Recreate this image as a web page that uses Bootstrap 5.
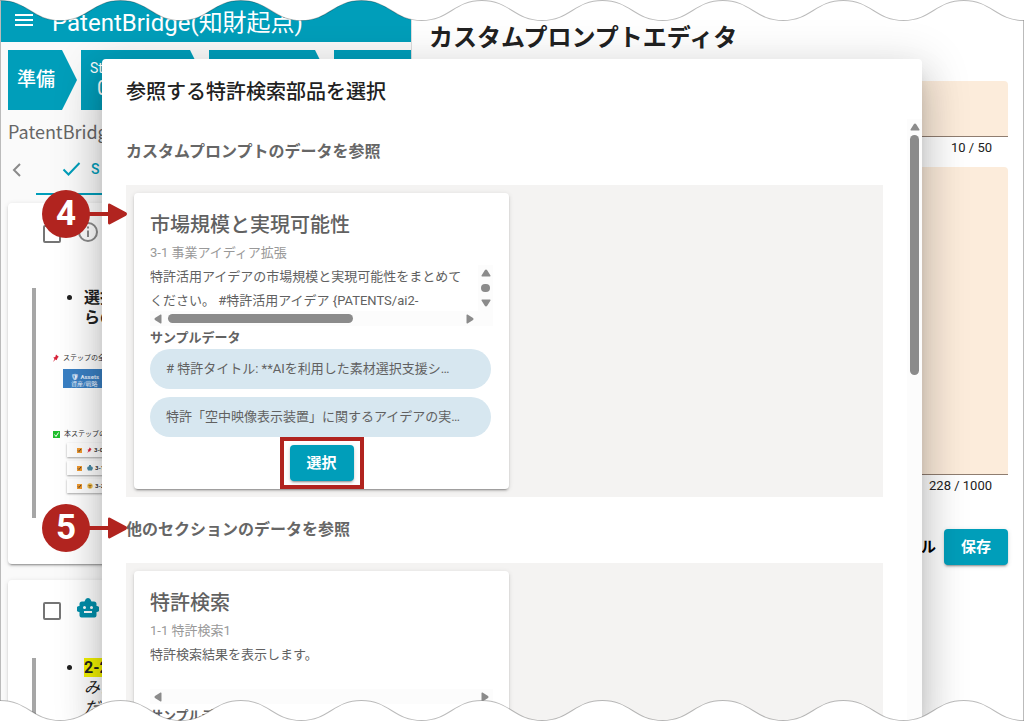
<!DOCTYPE html>
<html lang="ja">
<head>
<meta charset="utf-8">
<meta name="viewport" content="width=device-width, initial-scale=1">
<title>PatentBridge</title>
<link href="https://cdn.jsdelivr.net/npm/bootstrap@5.3.0/dist/css/bootstrap.min.css" rel="stylesheet">
<style>
:root{--teal:#009eba;--alert:#b1241f;--thumb:#8b8b8b}
body{font-family:Roboto,"Noto Sans CJK JP",sans-serif;font-size:13px;line-height:24px;color:#212121;background:#fff}
h1,h2,h3,h4,p,ul{margin:0}
.screen{height:100vh;min-height:600px}
.side{width:411px;background:#fafafa;border-left:1px solid #bbb}
.bar{height:42px;background:var(--teal);padding-left:13px;gap:18px}
.bar h1{font-size:24px;line-height:30px;padding-top:4px;font-weight:400}
.steps{padding:8px 0 0 7px;gap:4px}
.step{height:60px;background:var(--teal);color:#fff;width:124px;padding:10px 9px 0;font-size:14px;clip-path:polygon(0 0,calc(100% - 15px) 0,100% 50%,calc(100% - 15px) 100%,0 100%)}
.step-ready{width:69px;font-size:19px;line-height:40px;font-weight:500}
.step-third{width:121px}
.step-no{font-size:20px;line-height:20px;padding-left:7px}
.crumb{font:18px/26px "Noto Sans CJK JP",sans-serif;color:#666;padding:8px 0 0 7px}
.tabs{height:51px;padding-left:9px}
.tab-on{height:51px;margin-left:12px;padding:0 26px;gap:10px;border:0;border-bottom:2px solid var(--teal);background:none;color:var(--teal);font-size:14px;font-weight:500;width:300px}
.panel{background:#fff;border-radius:4px;box-shadow:0 3px 1px -2px rgba(0,0,0,.2),0 2px 2px rgba(0,0,0,.14),0 1px 5px rgba(0,0,0,.12)}
.side .panel{margin:8px 8px 0 7px;height:361px}
.side .panel + .panel{margin-top:16px}
.panel-head{height:58px;padding:0 0 0 35px;gap:16px}
.tick{appearance:none;width:18px;height:18px;border:2px solid #757575;border-radius:2px;margin:0}
.quote{margin:27px 16px 0 24px;border-left:4px solid #a6a6a6;height:230px;padding-left:17px}
.quote-near{margin-top:20px}
.quote ul{padding-left:31px;font-size:16px;line-height:20px}
.pic{font-size:7px;line-height:10px;color:#333;padding-top:25px}
.pic-line{margin-bottom:6px}
.asset{margin:0 0 41px 10px;background:#3a80c4;color:#e8f2ff;height:19px;width:120px;padding-left:8px;font-size:6px;line-height:7px}
.row-item{margin:0 0 4px 14px;height:14px;padding-left:10px;gap:2px;box-shadow:0 1px 2px rgba(0,0,0,.35);font-size:6px;font-weight:700;width:140px}
.row-item svg + svg{margin-left:3px}
.hl{background:#f3f300;font-weight:700}
.editor{background:#fff;border-left:1px solid #ddd;border-right:1px solid #bbb;padding:22px 15px 0 17px}
.editor h2{font-size:24px;line-height:32px;font-weight:700;margin-bottom:27px}
.fill{background:#fcecdb;border:0;border-bottom:1px solid #8f7d70;border-radius:4px 4px 0 0;resize:none;display:block;width:100%;height:56px}
.fill-tall{height:308px}
.count{line-height:22px;padding-right:16px}
.act{height:36px;font-size:15px;line-height:20px;font-weight:700;border:0;border-radius:4px}
.act-main{width:64px;background:var(--teal);color:#fff;box-shadow:0 3px 1px -2px rgba(0,0,0,.2),0 2px 2px rgba(0,0,0,.14),0 1px 5px rgba(0,0,0,.12)}
.dialog{top:59px;bottom:0;left:102px;right:102px;background:#fff;border-radius:4px 4px 0 0;box-shadow:0 11px 15px -7px rgba(0,0,0,.2),0 24px 38px 3px rgba(0,0,0,.14),0 9px 46px 8px rgba(0,0,0,.12)}
.dialog > h2{font-size:20px;line-height:32px;font-weight:500;padding:17px 24px 11px}
.dialog-body,.sections{min-height:0}
.sections{padding:0 24px}
.sections h3{font-size:16px;line-height:66px;font-weight:700;color:#666}
.tray{background:#f4f3f2;padding:8px;height:312px}
.pick{width:375px;height:296px;padding:17px 16px 8px;color:#616161}
.pick h4{font-size:20px;line-height:31px;font-weight:500}
.sub-line{color:#999}
.scroller{display:grid;grid-template-columns:1fr 15px;grid-template-rows:46px 15px;line-height:24px}
.sample{line-height:23px}
.track{background:#fcfcfc;padding:4px}
.track-wide{grid-column:1/3}
.track-main{width:15px;padding:4px 0}
.thumb{background:var(--thumb);border-radius:5px;width:9px}
.thumb-h{width:185px;height:9px;margin-left:6px}
.thumb-main{height:240px}
.chip{height:40px;border-radius:20px;background:#d7e7f0;padding:0 16px;line-height:39px;margin:0 2px 8px 0}
.frame{width:84px;height:52px;left:50%;top:50%;transform:translate(-50%,-50%);border:4px solid var(--alert)}
.callout{left:-84px;width:86px;height:48px}
.callout b{width:48px;font-size:35px;line-height:48px}
.call-a{top:71px}
.call-b{top:7px}
.wave{height:21px;left:0;z-index:5}
</style>
</head>
<body>
<svg width="0" height="0" class="position-absolute" aria-hidden="true">
<symbol id="tri" viewBox="0 0 10 8"><path d="M5 .5Q5.700 .5 6.200 1.300L9.500 6.500Q9.800 7.500 8.800 7.500H1.200Q.2 7.500 .5 6.500L3.800 1.300Q4.300 .5 5 .5Z" fill="#8b8b8b"/></symbol>
<symbol id="triL" viewBox="0 0 8 10"><path d="M.5 5Q.5 4.300 1.300 3.800L6.500 .5Q7.500 .2 7.500 1.200V8.800Q7.500 9.800 6.500 9.500L1.300 6.200Q.5 5.700 .5 5Z" fill="#8b8b8b"/></symbol>
</svg>
<div class="screen position-relative overflow-hidden d-flex">
  <aside class="side flex-shrink-0">
    <header class="bar d-flex align-items-center text-white">
      <svg width="20" height="14" viewBox="0 0 20 14" stroke="#fff" stroke-width="2"><path d="M1 1h18M1 6h18M1 11h18"/></svg>
      <h1>PatentBridge(知財起点)</h1>
    </header>
    <div class="steps d-flex overflow-hidden">
      <div class="step step-ready flex-shrink-0">準備</div>
      <div class="step flex-shrink-0"><div class="lh-sm">Step</div><div class="step-no">0</div></div>
      <div class="step step-third flex-shrink-0"></div>
      <div class="step flex-shrink-0"></div>
    </div>
    <div class="crumb">PatentBridge</div>
    <div class="tabs d-flex align-items-center">
      <svg width="14" height="16" viewBox="0 0 14 16" fill="none" stroke="#8a8a8a" stroke-width="2"><path d="M10 2 4 8l6 6"/></svg>
      <button class="tab-on d-flex align-items-center" type="button"><svg width="19" height="14" viewBox="0 0 19 14" fill="none" stroke="#009eba" stroke-width="2"><path d="m1.500 7.500 5 5L17.500 1"/></svg>S</button>
    </div>
    <section class="panel overflow-hidden">
      <div class="panel-head d-flex align-items-center">
        <input class="tick mt-1" type="checkbox" aria-label="選択">
        <svg width="22" height="22" viewBox="0 0 22 22" fill="none" stroke="#8c8c8c" stroke-width="2"><circle cx="11" cy="11" r="9"/><path d="M11 9.500v6.500M11 5.500v2"/></svg>
      </div>
      <div class="quote">
        <ul><li class="fw-bold">選択<br>らの</li></ul>
        <div class="pic">
          <div class="pic-line d-flex align-items-center gap-1"><svg width="6" height="8" viewBox="0 0 6 8"><path d="m3 .5 3 2.500-1 .3-1 2-.2 1L2.500 5.500 0 8l1.500-3L.3 3.500l2-.5Z" fill="#d8233a"/></svg>ステップの全体</div>
          <div class="asset pt-1"><b>🛡 Assets</b><br>資産/戦略</div>
          <div class="d-flex align-items-center gap-1 mb-1"><svg width="7" height="7" viewBox="0 0 7 7"><path d="M0 0h7v7H0Z" fill="#1fbe2c"/><path d="m1.500 3.500 1.500 2 2.500-4" fill="none" stroke="#fff"/></svg>本ステップの</div>
          <div class="row-item d-flex align-items-center"><svg width="5" height="5" viewBox="0 0 5 5"><path d="M0 0h5v5H0Z" fill="#f29a2e"/><path d="m1 2.500 1 1L4 1" fill="none" stroke="#543"/></svg><svg width="5" height="6" viewBox="0 0 6 8"><path d="m3 .5 3 2.500-1 .3-1 2-.2 1L2.500 5.500 0 8l1.500-3L.3 3.500l2-.5Z" fill="#d8233a"/></svg>3-0</div>
          <div class="row-item d-flex align-items-center"><svg width="5" height="5" viewBox="0 0 5 5"><path d="M0 0h5v5H0Z" fill="#f29a2e"/><path d="m1 2.500 1 1L4 1" fill="none" stroke="#543"/></svg><svg width="6" height="6" viewBox="0 0 6 6"><path d="M2 0h2v1.500h1L6 3 5 5.500H1L0 3l1-1.500h1Z" fill="#4b8ba5"/></svg>3-1</div>
          <div class="row-item d-flex align-items-center"><svg width="5" height="5" viewBox="0 0 5 5"><path d="M0 0h5v5H0Z" fill="#f29a2e"/><path d="m1 2.500 1 1L4 1" fill="none" stroke="#543"/></svg><svg width="6" height="6" viewBox="0 0 6 6"><circle cx="3" cy="3" r="2.700" fill="#f0c04e"/><path d="M1.500 2.500h3M2 4h2" stroke="#a66e25"/></svg>3-2</div>
        </div>
      </div>
    </section>
    <section class="panel overflow-hidden">
      <div class="panel-head d-flex align-items-center">
        <input class="tick mt-1" type="checkbox" aria-label="選択">
        <svg width="22" height="22" viewBox="0 0 22 22"><path fill="#008fab" fill-rule="evenodd" d="M11 0a3 3 0 0 1 3 2.500L14.500 3.500H17A2.500 2.500 0 0 1 19.500 6v2A3 3 0 0 1 19.500 14v3.500A2 2 0 0 1 17.500 19.500h-13A2 2 0 0 1 2.500 17.500V14A3 3 0 0 1 2.500 8V6A2.500 2.500 0 0 1 5 3.500h2.500L8 2.500A3 3 0 0 1 11 0ZM7.500 8a1.500 1.500 0 1 0 0 3 1.500 1.500 0 0 0 0-3Zm7 0a1.500 1.500 0 1 0 0 3 1.500 1.500 0 0 0 0-3ZM7 13V15h8v-2Z"/></svg>
      </div>
      <div class="quote quote-near">
        <ul><li><span class="hl">2-2</span><br><i>みた</i><br><i>ださい</i></li></ul>
      </div>
    </section>
  </aside>

  <main class="editor flex-grow-1">
    <h2>カスタムプロンプトエディタ</h2>
    <input class="fill" type="text" aria-label="プロンプト名">
    <div class="count text-end">10 / 50</div>
    <textarea class="fill fill-tall mt-2" aria-label="プロンプト"></textarea>
    <div class="count text-end">228 / 1000</div>
    <div class="d-flex justify-content-end mt-4 pt-2 gap-2">
      <button class="act bg-transparent text-black pe-0" type="button">キャンセル</button>
      <button class="act act-main" type="button">保存</button>
    </div>
  </main>

  <div class="dialog position-absolute d-flex flex-column" role="dialog" aria-labelledby="dlg">
    <h2 id="dlg">参照する特許検索部品を選択</h2>
    <div class="dialog-body d-flex flex-grow-1">
      <div class="sections flex-grow-1">
        <section class="position-relative">
          <div class="callout call-a position-absolute">
            <svg class="position-absolute top-0 start-0" width="86" height="48" viewBox="0 0 86 48" fill="#b1241f"><circle cx="24" cy="24" r="24"/><path d="M46 22h20v-7q0-2 2-1.300L84 22.300q2 1.700 0 3.400L68 34.300q-2 .7-2-1.300v-7H46Z"/></svg>
            <b class="position-absolute text-white text-center">4</b>
          </div>
          <h3>カスタムプロンプトのデータを参照</h3>
          <div class="tray">
            <article class="panel pick">
              <h4>市場規模と実現可能性</h4>
              <p class="sub-line">3-1 事業アイディア拡張</p>
              <div class="scroller">
                <div class="overflow-hidden text-nowrap">特許活用アイデアの市場規模と実現可能性をまとめて<br>ください。 #特許活用アイデア {PATENTS/ai2-</div>
                <div class="track d-flex flex-column align-items-center justify-content-between">
                  <svg width="10" height="8"><use href="#tri"/></svg>
                  <span class="thumb pt-2"></span>
                  <svg width="10" height="8"><use href="#tri" transform="rotate(180 5 4)"/></svg>
                </div>
                <div class="track d-flex align-items-center">
                  <svg width="8" height="10"><use href="#triL"/></svg>
                  <span class="thumb thumb-h"></span>
                  <svg class="ms-auto" width="8" height="10"><use href="#triL" transform="rotate(180 4 5)"/></svg>
                </div>
                <div class="track"></div>
              </div>
              <p class="sample fw-bold">サンプルデータ</p>
              <div class="chip text-truncate"># 特許タイトル: **AIを利用した素材選択支援シ…</div>
              <div class="chip text-truncate">特許「空中映像表示装置」に関するアイデアの実…</div>
              <div class="text-center position-relative">
                <button class="act act-main" type="button">選択</button>
                <div class="frame position-absolute pe-none"></div>
              </div>
            </article>
          </div>
        </section>
        <section class="position-relative">
          <div class="callout call-b position-absolute">
            <svg class="position-absolute top-0 start-0" width="86" height="48" viewBox="0 0 86 48" fill="#b1241f"><circle cx="24" cy="24" r="24"/><path d="M46 22h20v-7q0-2 2-1.300L84 22.300q2 1.700 0 3.400L68 34.300q-2 .7-2-1.300v-7H46Z"/></svg>
            <b class="position-absolute text-white text-center">5</b>
          </div>
          <h3>他のセクションのデータを参照</h3>
          <div class="tray">
            <article class="panel pick">
              <h4>特許検索</h4>
              <p class="sub-line">1-1 特許検索1</p>
              <div class="scroller">
                <div>特許検索結果を表示します。</div><div></div>
                <div class="track track-wide d-flex align-items-center justify-content-between">
                  <svg width="8" height="10"><use href="#triL"/></svg>
                  <svg width="8" height="10"><use href="#triL" transform="rotate(180 4 5)"/></svg>
                </div>
              </div>
              <p class="sample fw-bold">サンプルデータ</p>
            </article>
          </div>
        </section>
      </div>
      <div class="track track-main d-flex flex-column align-items-center gap-1">
        <svg class="flex-shrink-0" width="10" height="8"><use href="#tri"/></svg>
        <span class="thumb thumb-main flex-shrink-0"></span>
      </div>
    </div>
  </div>

  <svg id="waveTop" class="wave position-absolute top-0 w-100" viewBox="0 0 1020 21" preserveAspectRatio="none" aria-hidden="true"></svg>
  <svg id="waveEnd" class="wave position-absolute bottom-0 w-100" viewBox="0 0 1020 21" preserveAspectRatio="none" aria-hidden="true"></svg>
</div>
<script src="https://cdn.jsdelivr.net/npm/bootstrap@5.3.0/dist/js/bootstrap.bundle.min.js"></script>
<script>
// Torn-paper edges: alternating half waves, filled white on the outer side.
let curve = 'M0 .5';
for (let i = 0; i < 17; i++) curve += i % 2 ? 'c28 0 32 -20 60 -20' : 'c28 0 32 20 60 20';
const edge = y => `<path d="${curve}V${y}H0Z" fill="#fff"/><path d="${curve}" fill="none" stroke="#000" stroke-opacity=".27"/>`;
document.getElementById('waveTop').innerHTML = edge(-1);
document.getElementById('waveEnd').innerHTML = edge(22);
</script>
</body>
</html>
